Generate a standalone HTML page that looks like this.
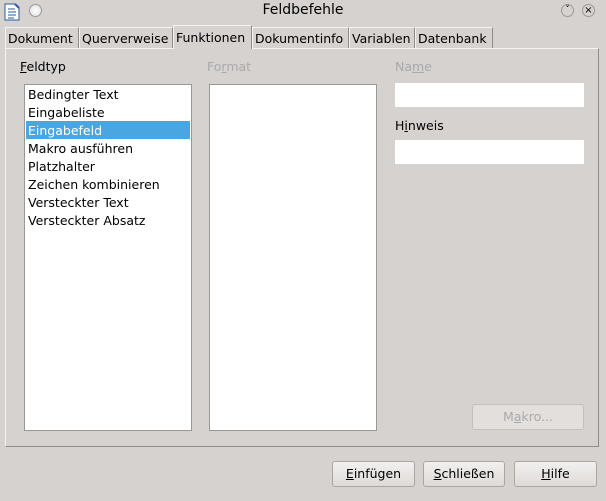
<!DOCTYPE html>
<html><head><style>
body{margin:0;width:606px;height:501px;background:#d6d2d0;font-family:"DejaVu Sans",sans-serif;font-size:12.5px;color:#000;position:relative;overflow:hidden}
.a{position:absolute}
.tab{position:absolute;top:27px;height:21px;border:1px solid #f4f3f2;border-bottom:none;border-right:1px solid #8e8b88;line-height:22px;padding:0 2px;box-sizing:border-box;background:#d6d2d0;white-space:nowrap;overflow:hidden}
.box{position:absolute;background:#fff;border:1px solid #9a9794;box-sizing:border-box}
.btn{position:absolute;border:1px solid #aaa6a2;border-radius:3px;background:linear-gradient(#f2f0ef,#dedad8);box-sizing:border-box;text-align:center;line-height:24px}
u{text-decoration:underline}
.it{position:absolute;left:1px;right:1px;height:18px;line-height:19px;padding-left:2px}
</style></head><body>
<svg class="a" style="left:4px;top:3px" width="16" height="18"><path d="M1 1h10l4 4v12H1z" fill="#fff" stroke="#2a5aa0"/><path d="M4 6h7M4 9h8M4 12h8M4 15h6" stroke="#2a5aa0"/><path d="M11 1l4 4" stroke="#2a5aa0" stroke-width="2"/></svg>
<div class="a" style="left:29px;top:4px;width:13px;height:13px;border-radius:50%;border:1px solid #999;background:radial-gradient(#fff,#ddd);box-sizing:border-box"></div>
<div class="a" style="left:0;width:606px;top:2px;text-align:center;font-size:14px">Feldbefehle</div>
<div class="a" style="left:561px;top:4px;width:13px;height:13px;border-radius:50%;border:1px solid #999;box-sizing:border-box;font-size:9px;line-height:11px;text-align:center">˅</div>
<div class="a" style="left:582px;top:4px;width:13px;height:13px;border-radius:50%;border:1px solid #999;box-sizing:border-box;font-size:10px;line-height:11px;text-align:center">×</div>
<div class="a" style="left:5px;top:48px;width:594px;height:399px;border:1px solid #8e8b88;border-left-color:#f4f3f2;border-top-color:#f4f3f2;box-sizing:border-box"></div>
<div class="tab" style="left:5px;width:74px">Dokument</div>
<div class="tab" style="left:79px;width:94px">Querverweise</div>
<div class="tab" style="left:173px;top:25px;height:24px;width:79px;line-height:24px;z-index:2">Funktionen</div>
<div class="tab" style="left:252px;width:97px">Dokumentinfo</div>
<div class="tab" style="left:349px;width:66px">Variablen</div>
<div class="tab" style="left:415px;width:78px">Datenbank</div>
<div class="a" style="left:20px;top:59px"><u>F</u>eldtyp</div>
<div class="a" style="left:207px;top:59px;color:#aaa">Fo<u>r</u>mat</div>
<div class="a" style="left:395px;top:59px;color:#aaa">Na<u>m</u>e</div>
<div class="a" style="left:395px;top:118px">H<u>i</u>nweis</div>
<div class="box" style="left:24px;top:84px;width:168px;height:347px">
<div class="it" style="top:0">Bedingter Text</div>
<div class="it" style="top:18px">Eingabeliste</div>
<div class="it" style="top:36px;background:#4aa6e0;color:#fff">Eingabefeld</div>
<div class="it" style="top:54px">Makro ausführen</div>
<div class="it" style="top:72px">Platzhalter</div>
<div class="it" style="top:90px">Zeichen kombinieren</div>
<div class="it" style="top:108px">Versteckter Text</div>
<div class="it" style="top:126px">Versteckter Absatz</div>
</div>
<div class="box" style="left:209px;top:84px;width:168px;height:347px"></div>
<div class="a" style="left:395px;top:83px;width:189px;height:24px;background:#fff"></div>
<div class="a" style="left:395px;top:140px;width:189px;height:24px;background:#fff"></div>
<div class="btn" style="left:472px;top:404px;width:112px;height:26px;color:#aaa;border-color:#c4c0bc;background:#e2dfdd">M<u>a</u>kro...</div>
<div class="btn" style="left:332px;top:461px;width:83px;height:26px"><u>E</u>infügen</div>
<div class="btn" style="left:423px;top:461px;width:82px;height:26px"><u>S</u>chließen</div>
<div class="btn" style="left:514px;top:461px;width:83px;height:26px"><u>H</u>ilfe</div>
</body></html>
